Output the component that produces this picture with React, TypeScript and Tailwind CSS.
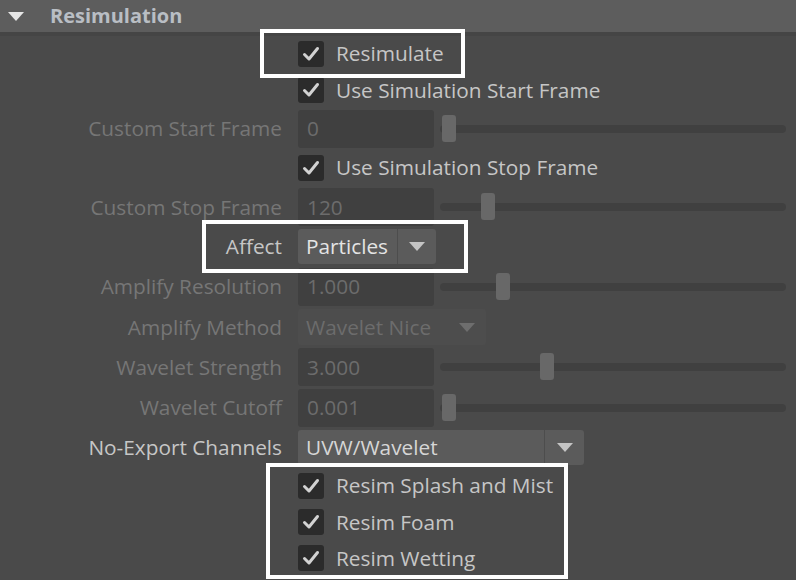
import React from "react";

const font = { fontFamily: '"Open Sans", "Noto Sans", sans-serif' };

function Check() {
  return (
    <div className="w-[26px] h-[26px] rounded-[3px] bg-[#2b2b2b] flex items-center justify-center shrink-0">
      <svg width="20" height="20" viewBox="0 0 20 20">
        <path d="M3.5 10.5 L8 15 L16.5 4.5" fill="none" stroke="#d2d2d2" strokeWidth="3" strokeLinecap="round" strokeLinejoin="round" />
      </svg>
    </div>
  );
}

function Tri({ color }: { color: string }) {
  return (
    <svg width="16" height="9" viewBox="0 0 16 9">
      <polygon points="0,0 16,0 8,9" fill={color} />
    </svg>
  );
}

function Row({ h, label, enabled, children }: { h: string; label?: string; enabled?: boolean; children: React.ReactNode }) {
  return (
    <div className={`flex items-center ${h}`}>
      <div className={`w-[282px] shrink-0 text-right whitespace-nowrap ${enabled ? "text-[#c6c6c6]" : "text-[#767676]"}`}>{label ?? ""}</div>
      <div className="ml-[16px] flex-1 flex items-center">{children}</div>
    </div>
  );
}

function CheckRow({ h, text }: { h: string; text: string }) {
  return (
    <Row h={h}>
      <Check />
      <span className="ml-[12px] text-[#c6c6c6] whitespace-nowrap">{text}</span>
    </Row>
  );
}

function SliderRow({ h, label, value, pos }: { h: string; label: string; value: string; pos: number }) {
  return (
    <Row h={h} label={label}>
      <div className="w-[136px] h-[38px] rounded-[3px] bg-[#404040] flex items-center pl-[9px] text-[#6c6c6c] shrink-0">{value}</div>
      <div className="relative ml-[6px] mr-[10px] flex-1 h-[28px] flex items-center">
        <div className="w-full h-[8px] rounded-[4px] bg-[#404040]" />
        <div className="absolute top-0 w-[14px] h-[27px] rounded-[3px] bg-[#686868]" style={{ left: pos }} />
      </div>
    </Row>
  );
}

export default function App() {
  return (
    <div className="w-[796px] h-[580px] bg-[#4a4a4a] relative overflow-hidden text-[20.8px] leading-none" style={font}>
      <div className="h-[32px] bg-[#5d5d5d] flex items-center">
        <div className="ml-[8px] w-[16px] flex items-center">
          <Tri color="#e6e6e6" />
        </div>
        <span className="ml-[26px] font-bold text-[20px] text-[#b9bec4]">Resimulation</span>
      </div>
      <div className="h-[4px] bg-[#454545]" />
      <div className="flex flex-col">
        <CheckRow h="h-[35px]" text="Resimulate" />
        <CheckRow h="h-[38px]" text="Use Simulation Start Frame" />
        <SliderRow h="h-[39px]" label="Custom Start Frame" value="0" pos={2} />
        <CheckRow h="h-[39px]" text="Use Simulation Stop Frame" />
        <SliderRow h="h-[40px]" label="Custom Stop Frame" value="120" pos={41} />
        <Row h="h-[39px]" label="Affect" enabled>
          <div className="w-[138px] h-[35px] rounded-[3px] bg-[#5b5b5b] flex">
            <div className="w-[99px] flex items-center pl-[8px] text-[#e4e4e4]">Particles</div>
            <div className="w-[1px] bg-[#4d4d4d]" />
            <div className="flex-1 flex items-center justify-center">
              <Tri color="#c4c4c4" />
            </div>
          </div>
        </Row>
        <SliderRow h="h-[41px]" label="Amplify Resolution" value="1.000" pos={56} />
        <Row h="h-[40px]" label="Amplify Method">
          <div className="w-[188px] h-[36px] rounded-[3px] bg-[#4d4d4d] flex">
            <div className="flex-1 flex items-center pl-[8px] text-[#6c6c6c] whitespace-nowrap">Wavelet Nice</div>
            <div className="w-[38px] flex items-center justify-center">
              <Tri color="#6e6e6e" />
            </div>
          </div>
        </Row>
        <SliderRow h="h-[40px]" label="Wavelet Strength" value="3.000" pos={100} />
        <SliderRow h="h-[41px]" label="Wavelet Cutoff" value="0.001" pos={2} />
        <Row h="h-[39px]" label="No-Export Channels" enabled>
          <div className="w-[286px] h-[35px] rounded-[3px] bg-[#5b5b5b] flex">
            <div className="w-[246px] flex items-center pl-[8px] text-[#d6d6d6]">UVW/Wavelet</div>
            <div className="w-[1px] bg-[#4d4d4d]" />
            <div className="flex-1 flex items-center justify-center">
              <Tri color="#c4c4c4" />
            </div>
          </div>
        </Row>
        <CheckRow h="h-[37px]" text="Resim Splash and Mist" />
        <CheckRow h="h-[36px]" text="Resim Foam" />
        <CheckRow h="h-[36px]" text="Resim Wetting" />
      </div>
      <div className="absolute left-[260px] top-[29px] w-[205px] h-[49px] border-[4px] border-white" />
      <div className="absolute left-[202px] top-[220px] w-[266px] h-[53px] border-[4px] border-white" />
      <div className="absolute left-[266px] top-[463px] w-[302px] h-[116px] border-[4px] border-white" />
    </div>
  );
}
